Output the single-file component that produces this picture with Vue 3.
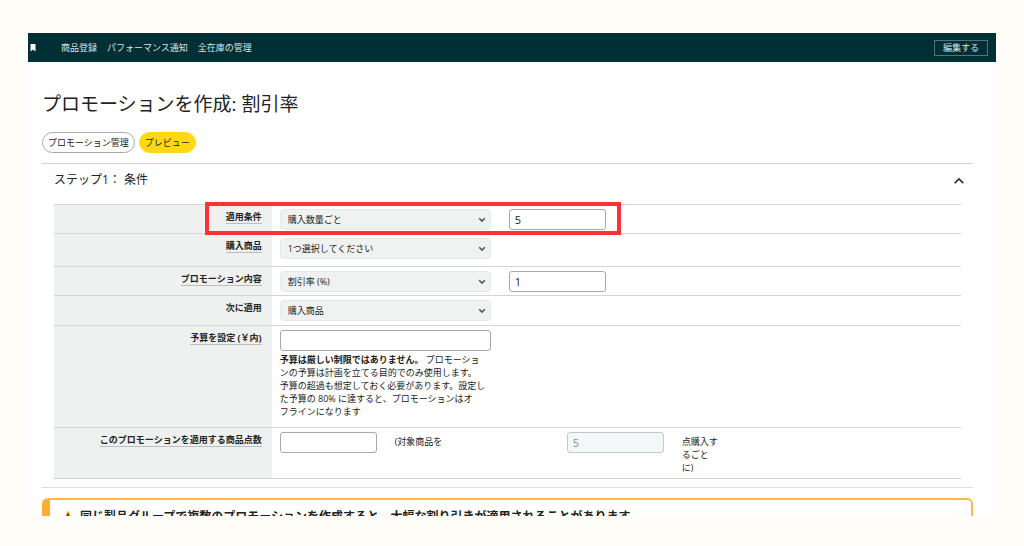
<script setup>
import { ref } from 'vue'

const navLinks = ['商品登録', 'パフォーマンス通知', '全在庫の管理']
const condition = ref('購入数量ごと')
const quantity = ref('5')
const product = ref('1つ選択してください')
const benefit = ref('割引率 (%)')
const rate = ref('1')
const target = ref('購入商品')
const budget = ref('')
const count = ref('')
const open = ref(true)
</script>

<template>
  <div class="page">
    <div class="window">
      <header class="topbar">
        <svg class="bookmark" viewBox="0 0 6 8" aria-hidden="true">
          <path d="M0.5 0h5v7.6L3 5.6 0.5 7.6z" fill="#fff" />
        </svg>
        <nav class="nav">
          <a v-for="link in navLinks" :key="link" href="#">{{ link }}</a>
        </nav>
        <button class="edit" type="button">編集する</button>
      </header>

      <main class="content">
        <h1>プロモーションを作成: 割引率</h1>
        <div class="actions">
          <button class="pill" type="button">プロモーション管理</button>
          <button class="pill primary" type="button">プレビュー</button>
        </div>

        <section class="step">
          <div class="step-head">
            <h2>ステップ1： 条件</h2>
            <button class="toggle" type="button" aria-label="条件を閉じる" :aria-expanded="open" @click="open = !open">
              <svg viewBox="0 0 12 8" aria-hidden="true">
                <path d="M1.7 6.2L6 2l4.3 4.2" fill="none" stroke="#333" stroke-width="1.7" />
              </svg>
            </button>
          </div>

          <form v-show="open" class="rows" @submit.prevent>
            <div class="row tight marked">
              <div class="name"><label class="hint" for="condition">適用条件</label></div>
              <div class="fields">
                <select id="condition" v-model="condition"><option>購入数量ごと</option></select>
                <input v-model="quantity" class="short" type="text" aria-label="数量" />
              </div>
            </div>
            <div class="row spaced">
              <div class="name"><label class="hint" for="product">購入商品</label></div>
              <div class="fields">
                <select id="product" v-model="product"><option>1つ選択してください</option></select>
              </div>
            </div>
            <div class="row tight">
              <div class="name"><label class="hint" for="benefit">プロモーション内容</label></div>
              <div class="fields">
                <select id="benefit" v-model="benefit"><option>割引率 (%)</option></select>
                <input v-model="rate" class="short" type="text" aria-label="割引率" />
              </div>
            </div>
            <div class="row">
              <div class="name"><label for="target">次に適用</label></div>
              <div class="fields">
                <select id="target" v-model="target"><option>購入商品</option></select>
              </div>
            </div>
            <div class="row budget">
              <div class="name"><label class="hint" for="budget">予算を設定 (￥内)</label></div>
              <div class="fields">
                <input id="budget" v-model="budget" type="text" />
                <p>
                  <b>予算は厳しい制限ではありません。</b> プロモーショ<br />ンの予算は計画を立てる目的でのみ使用します。<br />予算の超過も想定しておく必要があります。設定し<br />た予算の 80% に達すると、プロモーションはオ<br />フラインになります
                </p>
              </div>
            </div>
            <div class="row">
              <div class="name"><label class="hint" for="count">このプロモーションを適用する商品点数</label></div>
              <div class="fields">
                <input id="count" v-model="count" class="short" type="text" />
                <span class="before">(対象商品を</span>
                <input class="short" type="text" value="5" aria-label="対象商品の点数" disabled />
                <span class="after">点購入するごとに)</span>
              </div>
            </div>
          </form>
        </section>

        <div class="alert" role="alert">
          <svg viewBox="0 0 12 12" aria-hidden="true">
            <path d="M6 0.6L11.6 11.400H0.400z" fill="#f9a01b" />
            <path d="M6 3.600v4M6 8.600v1.500" stroke="#222" stroke-width="1.500" />
          </svg>
          <strong>同じ製品グループで複数のプロモーションを作成すると、大幅な割り引きが適用されることがあります</strong>
        </div>
      </main>
    </div>
  </div>
</template>

<style>
body {
  background: #fffdf7;
}
</style>

<style scoped>
*,
*::after {
  box-sizing: border-box;
}

.page {
  display: flex;
  height: 100vh;
  padding: 33px 28px 30px;
  color: #222;
  font-family: "Open Sans", "Noto Sans CJK JP", sans-serif;
  font-size: 9px;
  line-height: 13px;
}

.window {
  flex: 1;
  min-width: 0;
  overflow: hidden;
  background: #fff;
}

button,
input,
select {
  margin: 0;
  color: inherit;
  font: inherit;
}

.topbar {
  display: flex;
  align-items: center;
  height: 29px;
  padding: 0 8px 0 2px;
  background: #002f36;
  color: #dbe3e4;
}

.bookmark {
  width: 6px;
  height: 8px;
}

.nav {
  display: flex;
  flex: 1;
  gap: 10px;
  margin-left: 25px;
}

.nav a {
  color: inherit;
  text-decoration: none;
}

.edit {
  width: 54px;
  height: 16px;
  padding: 0;
  border: 1px solid #557579;
  background: none;
  line-height: 14px;
}

.content {
  padding: 30px 23px 0 14px;
}

h1 {
  margin: 0;
  font-size: 19px;
  font-weight: 400;
  line-height: 24px;
}

.actions {
  display: flex;
  gap: 4px;
  margin: 16px 0 10px;
}

.pill {
  height: 21px;
  padding: 0 5px;
  border: 1px solid #a5a9a9;
  border-radius: 11px;
  background: #fff;
  line-height: 19px;
}

.pill.primary {
  border-color: #ffd814;
  background: #ffd814;
}

.step {
  padding: 0 12px 8px;
  border-top: 1px solid #d0d3d3;
  border-bottom: 1px solid #dcdfdf;
}

.step-head {
  display: flex;
  align-items: center;
  justify-content: space-between;
  height: 34px;
  margin-bottom: 6px;
}

h2 {
  margin: 0;
  padding-bottom: 3px;
  font-size: 12px;
  font-weight: 400;
}

.toggle {
  width: 12px;
  height: 12px;
  margin-right: -4px;
  padding: 0;
  border: 0;
  background: none;
}

.toggle svg {
  display: block;
  width: 12px;
  height: 8px;
}

.rows {
  border-bottom: 1px solid #ced2d2;
}

.row {
  display: grid;
  grid-template-columns: 24% 1fr;
  border-top: 1px solid #d2d6d6;
}

.name {
  padding: 5px 10px 0 0;
  background: #eff1f1;
  font-weight: 700;
  text-align: right;
}

.name label {
  display: inline-block;
}

.hint {
  border-bottom: 1px solid #b9bdbd;
}

.fields {
  display: flex;
  align-items: flex-start;
  gap: 18px;
  padding: 4px 8px;
}

.tight .fields {
  padding-bottom: 3px;
}

.spaced .fields {
  padding-bottom: 7px;
}

.budget .fields {
  flex-direction: column;
  gap: 2px;
  padding-bottom: 9px;
}

.marked {
  position: relative;
}

.marked::after {
  position: absolute;
  top: -3px;
  left: calc(24% - 67px);
  width: 416px;
  height: 33px;
  border: 4px solid #ff3131;
  content: "";
  pointer-events: none;
}

select {
  width: 211px;
  height: 21px;
  padding: 0 7px;
  border: 1px solid #e6e9e9;
  border-radius: 4px;
  appearance: none;
  background: #f0f2f2 url("data:image/svg+xml,%3Csvg xmlns='http://www.w3.org/2000/svg' viewBox='0 0 8 6'%3E%3Cpath d='M1.2 1.2L4 4l2.8-2.8' fill='none' stroke='%23505555' stroke-width='1.6'/%3E%3C/svg%3E") no-repeat right 4px center / 8px 6px;
}

input {
  width: 211px;
  height: 21px;
  padding: 0 5px;
  border: 1px solid #a5a9a9;
  border-radius: 3px;
  background: #fff;
  font-size: 11px;
}

input.short {
  width: 97px;
}

input:disabled {
  border-color: #c3c8c8;
  background: #f3f7f8;
  color: #8a8f8f;
}

.fields p {
  margin: 0;
  white-space: nowrap;
}

.fields span {
  padding-top: 3px;
}

.before {
  width: 154px;
}

.after {
  width: 38px;
}

.alert {
  display: flex;
  align-items: center;
  gap: 6px;
  height: 60px;
  margin-top: 10px;
  padding: 0 12px 24px;
  border: 2px solid #fcb84d;
  border-left: 8px solid #ffae35;
  border-radius: 6px;
  font-size: 12px;
}

.alert svg {
  width: 12px;
  height: 12px;
}
</style>
